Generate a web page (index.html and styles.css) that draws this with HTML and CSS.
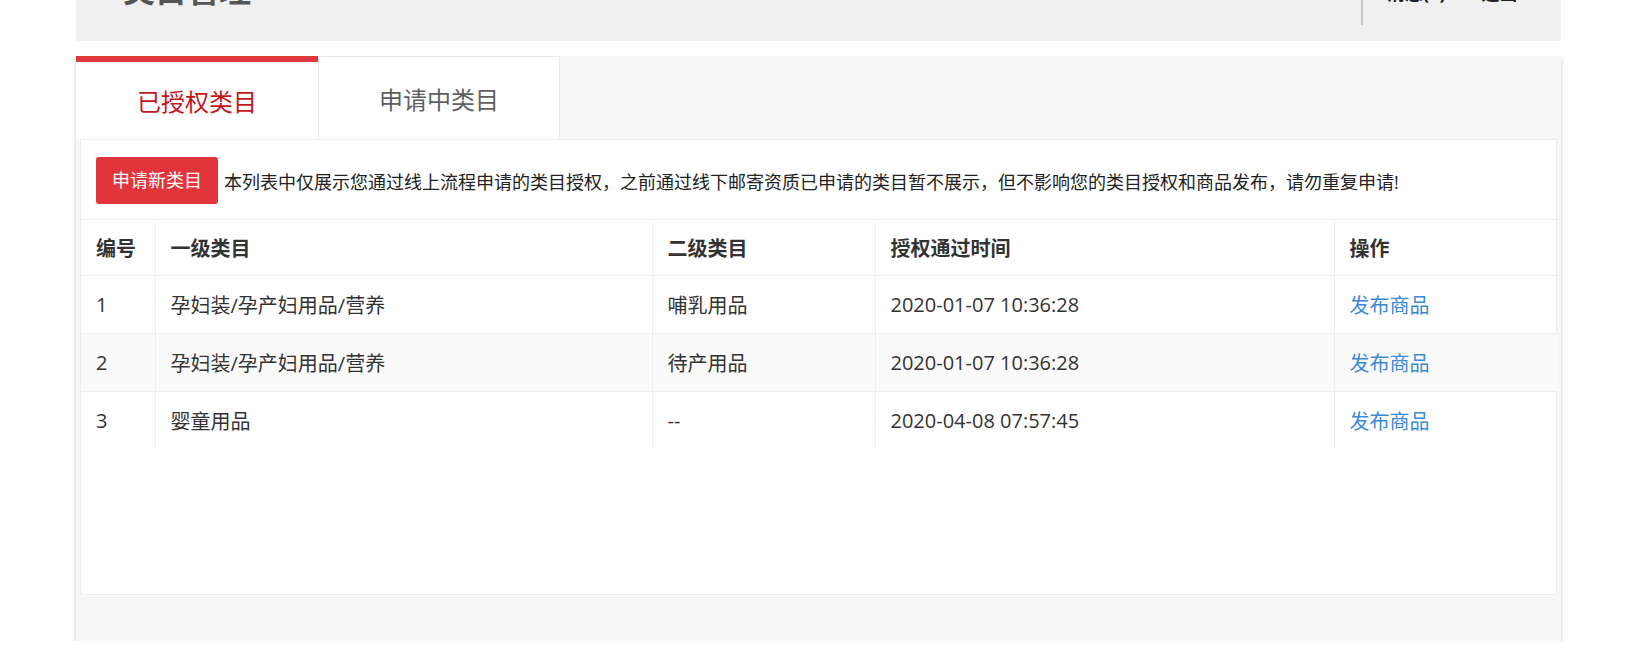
FILE: index.html
```html
<!DOCTYPE html>
<html lang="zh-CN">
<head>
    <meta charset="UTF-8">
    <meta name="viewport" content="width=device-width, initial-scale=1.0">
    <title>类目管理</title>

    <link rel="stylesheet" href="styles.css">

</head>
<body>

    <div class="page">
        <div class="top-bar">
            <h1 class="title">类目管理</h1>
            <div class="top-user">
                <span>消息(0)</span>
                <span class="logout">退出</span>
            </div>
        </div>

        <div class="panel">
            <div class="tabs">
                <div class="tab active">已授权类目</div>
                <div class="tab">申请中类目</div>
            </div>

            <div class="panel-body">
                <div class="notice">
                    <a class="btn-apply" href="#">申请新类目</a>
                    <span class="notice-text">本列表中仅展示您通过线上流程申请的类目授权，之前通过线下邮寄资质已申请的类目暂不展示，但不影响您的类目授权和商品发布，请勿重复申请!</span>
                </div>

                <table class="cat-table">
                    <colgroup>
                        <col class="c-no">
                        <col class="c-first">
                        <col class="c-second">
                        <col class="c-time">
                        <col class="c-op">
                    </colgroup>
                    <thead>
                        <tr>
                            <th>编号</th>
                            <th>一级类目</th>
                            <th>二级类目</th>
                            <th>授权通过时间</th>
                            <th>操作</th>
                        </tr>
                    </thead>
                    <tbody>
                        <tr>
                            <td>1</td>
                            <td>孕妇装/孕产妇用品/营养</td>
                            <td>哺乳用品</td>
                            <td>2020-01-07 10:36:28</td>
                            <td><a href="#">发布商品</a></td>
                        </tr>
                        <tr>
                            <td>2</td>
                            <td>孕妇装/孕产妇用品/营养</td>
                            <td>待产用品</td>
                            <td>2020-01-07 10:36:28</td>
                            <td><a href="#">发布商品</a></td>
                        </tr>
                        <tr>
                            <td>3</td>
                            <td>婴童用品</td>
                            <td>--</td>
                            <td>2020-04-08 07:57:45</td>
                            <td><a href="#">发布商品</a></td>
                        </tr>
                    </tbody>
                </table>
            </div>

            <div class="panel-foot"></div>
        </div>
    </div>

</body>
</html>
```

FILE: styles.css
```css
body {
margin: 0;
background: #fff;
color: #333;
font-family: "Open Sans", "Noto Sans CJK SC", sans-serif;
}

.page {
width: 1485px;
margin: -50px 0 0 76px;
}

/* header, mostly scrolled out of view */
.top-bar {
height: 91px;
background: #f0f0f0;
display: flex;
align-items: flex-start;
padding-left: 47px;
box-sizing: border-box;
}

.title {
margin: 24px 0 0;
font-size: 32px;
line-height: 32px;
color: #555;
}

.top-user {
margin-left: auto;
margin-top: 30px;
width: 200px;
height: 45px;
box-sizing: border-box;
border-left: 2px solid #c8c8c8;
padding: 4px 0 0 24px;
display: flex;
gap: 36px;
font-size: 18px;
line-height: 18px;
font-weight: bold;
color: #222;
}

.panel {
margin-top: 15px;
background: #f7f7f7;
box-shadow: 0 3px 4px rgba(0, 0, 0, 0.22);
}

.tabs {
display: flex;
height: 83px;
}

.tab {
width: 242px;
box-sizing: border-box;
background: #fff;
border: 1px solid #e8e8e8;
border-bottom: none;
display: flex;
align-items: center;
justify-content: center;
font-size: 24px;
color: #5f5f5f;
}

.tab.active {
border: none;
border-top: 6px solid #dc3a3f;
color: #c3171d;
}

.panel-body {
margin: 0 4px;
height: 456px;
box-sizing: border-box;
background: #fff;
border: 1px solid #ececec;
}

.notice {
display: flex;
align-items: center;
padding: 17px 15px 15px;
border-bottom: 1px solid #eee;
}

.btn-apply {
display: inline-block;
width: 122px;
height: 47px;
line-height: 47px;
text-align: center;
background: #e2353b;
color: #fff;
font-size: 18px;
border-radius: 3px;
text-decoration: none;
}

.notice-text {
margin-left: 6px;
font-size: 18px;
color: #222;
}

.cat-table {
width: 100%;
border-collapse: collapse;
table-layout: fixed;
font-size: 20px;
}

.c-no { width: 74px; }
.c-first { width: 497px; }
.c-second { width: 223px; }
.c-time { width: 459px; }
.c-op { width: 224px; }

.cat-table th,
.cat-table td {
text-align: left;
padding: 0 15px;
border-right: 1px solid #eee;
border-bottom: 1px solid #eee;
white-space: nowrap;
}

.cat-table th:last-child,
.cat-table td:last-child {
border-right: none;
}

.cat-table th {
height: 55px;
font-weight: bold;
color: #333;
}

.cat-table td {
height: 57px;
color: #333;
}

.cat-table tbody tr:nth-child(2) {
background: #fafafa;
}

.cat-table tbody tr:last-child td {
border-bottom: none;
height: 56px;
}

.cat-table a {
color: #3b8ad4;
text-decoration: none;
}

.panel-foot {
height: 46px;
}
```
